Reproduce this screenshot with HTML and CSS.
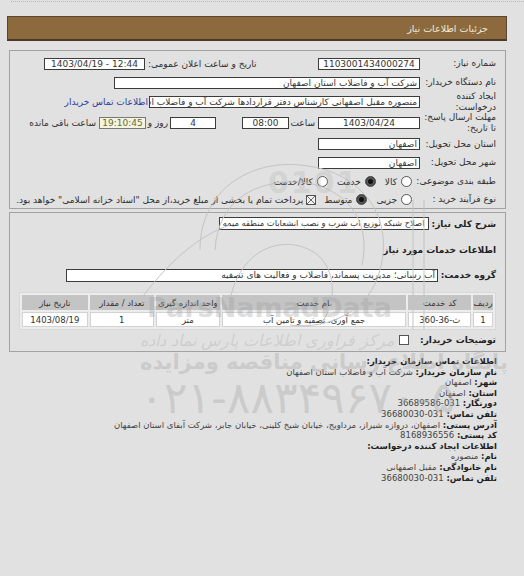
FILE: index.html
```html
<!DOCTYPE html>
<html dir="rtl" lang="fa">
<head>
<meta charset="utf-8">
<link rel="stylesheet" href="styles.css">
</head>
<body>
<div class="topline"></div>
<div class="hdr"><span>جزئیات اطلاعات نیاز</span></div>

<div class="panel p1">
  <div class="row r1">
    <div class="lbl">شماره نیاز:</div>
    <div class="box w102 c">1103001434000274</div>
    <div class="lbl2">تاریخ و ساعت اعلان عمومی:</div>
    <div class="box w101 c ltr">1403/04/19 - 12:44</div>
  </div>
  <div class="row r2">
    <div class="lbl">نام دستگاه خریدار:</div>
    <div class="box w306">شرکت آب و فاضلاب استان اصفهان</div>
  </div>
  <div class="row r3">
    <div class="lbl ml">ایجاد کننده<br>درخواست:</div>
    <div class="box w271 clip">منصوره مقبل اصفهانی کارشناس دفتر قراردادها شرکت آب و فاضلاب استان اصفهان</div>
    <a class="link">اطلاعات تماس خریدار</a>
  </div>
  <div class="row r4">
    <div class="lbl ml">مهلت ارسال پاسخ:<br>تا تاریخ:</div>
    <div class="box w102 c">1403/04/24</div>
    <div class="cell w29">ساعت</div>
    <div class="box w47 c">08:00</div>
    <div class="spacer"></div>
    <div class="box w46 c">4</div>
    <div class="cell w24">روز و</div>
    <div class="box w47 c remain">19:10:45</div>
    <div class="cell pr3">ساعت باقی مانده</div>
  </div>
  <div class="row r5">
    <div class="lbl">استان محل تحویل:</div>
    <div class="box w102">اصفهان</div>
  </div>
  <div class="row r6">
    <div class="lbl">شهر محل تحویل:</div>
    <div class="box w102">اصفهان</div>
  </div>
  <div class="row r7">
    <div class="lbl">طبقه بندی موضوعی:</div>
    <span class="radio first"></span><span class="opt">کالا</span>
    <span class="radio on"></span><span class="opt">خدمت</span>
    <span class="radio"></span><span class="opt">کالا/خدمت</span>
  </div>
  <div class="row r8">
    <div class="lbl">نوع فرآیند خرید :</div>
    <span class="radio first"></span><span class="opt">جزیی</span>
    <span class="radio on"></span><span class="opt">متوسط</span>
    <span class="chk x"></span><span class="opt">پرداخت تمام یا بخشی از مبلغ خرید،از محل "اسناد خزانه اسلامی" خواهد بود.</span>
  </div>
</div>

<div class="panel p2">
  <div class="row s1">
    <div class="blbl">شرح کلی نیاز:</div>
    <div class="box auto small">اصلاح شبکه توزیع اب شرب و نصب انشعابات منطقه میمه</div>
  </div>
  <div class="row s2">
    <div class="blbl">اطلاعات خدمات مورد نیاز</div>
  </div>
  <div class="row s3">
    <div class="blbl">گروه خدمت:</div>
    <div class="box w372">آب رسانی؛ مدیریت پسماند، فاضلاب و فعالیت های تصفیه</div>
  </div>
  <table class="grid">
    <tr>
      <th class="c1">ردیف</th>
      <th class="c2">کد خدمت</th>
      <th class="c3">نام خدمت</th>
      <th class="c4">واحد اندازه گیری</th>
      <th class="c5">تعداد / مقدار</th>
      <th class="c6">تاریخ نیاز</th>
    </tr>
    <tr>
      <td>1</td>
      <td>ث-36-360</td>
      <td>جمع آوری، تصفیه و تامین آب</td>
      <td>متر</td>
      <td>1</td>
      <td>1403/08/19</td>
    </tr>
  </table>
  <div class="row s4">
    <div class="blbl">توضیحات خریدار:</div>
    <span class="chk"></span>
  </div>
</div>

<div class="contact">
  <div><b>اطلاعات تماس سازمان خریدار:</b></div>
  <div><b>نام سازمان خریدار:</b> شرکت آب و فاضلاب استان اصفهان</div>
  <div><b>شهر:</b> اصفهان</div>
  <div><b>استان:</b> اصفهان</div>
  <div><b>دورنگار:</b> 031-36689586</div>
  <div><b>تلفن تماس:</b> 031-36680030</div>
  <div><b>آدرس پستی:</b> اصفهان، دروازه شیراز، مرداویج، خیابان شیخ کلینی، خیابان جابر، شرکت آبفای استان اصفهان</div>
  <div><b>کد پستی:</b> 8168936556</div>
  <div><b>اطلاعات ایجاد کننده درخواست:</b></div>
  <div><b>نام:</b> منصوره</div>
  <div><b>نام خانوادگی:</b> مقبل اصفهانی</div>
  <div><b>تلفن تماس:</b> 031-36680030</div>
</div>

<svg class="wm-art" width="524" height="576" viewBox="0 0 524 576">
  <g fill="none" stroke="#c4c4c4" stroke-width="1">
    <path d="M200 250 C200 190 250 160 300 165 C360 170 395 215 380 270 C370 310 330 330 290 325"/>
    <path d="M215 250 C218 200 255 180 300 182 C345 186 372 220 362 265"/>
    <path d="M230 300 C240 250 280 235 310 250 C335 262 340 300 320 325"/>
    <path d="M413 200 L413 330 M424 200 L424 330"/>
    <path d="M140 300 C170 260 200 235 230 225"/>
  </g>
</svg>
<div class="wm wm-num">0101</div>
<div class="wm wm-en">ParsNamadData</div>
<div class="wm wm-1">مرکز فراوری اطلاعات پارس نماد داده</div>
<div class="wm wm-2">پایگاه اطلاع رسانی مناقصه ومزایده</div>
<div class="wm wm-3">۰۲۱-۸۸۳۴۹۶۷۰-۵</div>
</body>
</html>
```
FILE: styles.css
```css
* { box-sizing: border-box; }
html, body { margin: 0; padding: 0; }
body {
  background: #e1e1e1;
  font-family: Tahoma, "DejaVu Sans", sans-serif;
  font-size: 9px;
  color: #2e2e2e;
  width: 524px;
  height: 576px;
  overflow: hidden;
  position: relative;
}
.topline {
  height: 0;
  border-top: 1px dotted #b8b8b8;
  margin: 1px 0 0 11px;
}
.hdr {
  margin: 14px 17px 0 7px;
  height: 25px;
  background: #8c6a3d;
  border: 1px solid #5a4630;
  border-bottom: 2px solid #4a3a28;
  color: #f4ead6;
  display: flex;
  align-items: center;
  padding-right: 18px;
  font-size: 9.5px;
}
.panel {
  margin-left: 9px;
  margin-right: 18px;
  border: 1px solid #a2a2a2;
}
.p1 { margin-top: 9px; height: 159px; padding: 3px 9px 0 0; }
.p2 { margin-top: 3px; height: 140px; padding: 3px 9px 0 0; }
.row { display: flex; align-items: center; white-space: nowrap; }
.r1, .r2, .r3, .r6, .r7 { height: 19px; }
.r4 { height: 24px; }
.r5 { height: 18px; }
.r8 { height: 17px; }
.lbl { width: 76px; flex: none; line-height: 11px; }
.lbl.ml { white-space: normal; }
.lbl2 { width: 173px; flex: none; text-align: left; padding-left: 3px; }
.box {
  height: 12px;
  border: 1px solid #3c3c3c;
  background: #fff;
  line-height: 10px;
  padding: 0 2px;
  flex: none;
  overflow: hidden;
  color: #333;
}
.box.c { text-align: center; }
.box.ltr { direction: ltr; }
.box.small { font-size: 8.4px; padding: 0 3px 0 3px; }
.box.auto { width: auto; }
.w102 { width: 102px; }
.w101 { width: 101px; }
.w306 { width: 306px; }
.w271 { width: 271px; }
.w47 { width: 47px; }
.w46 { width: 46px; }
.w372 { width: 372px; }
.clip { white-space: nowrap; }
.link { color: #2a3ca0; margin-right: 1px; }
.cell { flex: none; }
.w29 { width: 29px; padding-right: 3px; }
.w24 { width: 24px; padding-right: 2px; }
.pr3 { padding-right: 3px; }
.spacer { width: 26px; flex: none; }
.remain { background: #f4f4e0; color: #6b6b30; border-color: #777; }
.radio {
  width: 11px; height: 11px;
  border: 1px solid #555;
  border-radius: 50%;
  background: #fff;
  flex: none;
  margin: 0 9px 0 4px;
  position: relative;
}
.radio.first { margin-right: 8px; }
.radio.on { background: #111; box-shadow: inset 0 0 0 2px #555; }
.opt { flex: none; }
.chk {
  width: 10px; height: 10px;
  border: 1px solid #555;
  background: #fff;
  flex: none;
  margin: 0 8px 0 3px;
  position: relative;
}
.chk.x {
  background:
    linear-gradient(45deg, transparent 45%, #666 45%, #666 55%, transparent 55%),
    linear-gradient(-45deg, transparent 45%, #666 45%, #666 55%, transparent 55%),
    #f2f2f2;
}
.blbl { font-weight: bold; flex: none; padding-left: 3px; color: #222; }
.s1 { height: 15px; }
.s1 .box { height: 13px; line-height: 11px; }
.s2 { height: 22px; margin-top: 8px; }
.s3 { height: 16px; margin-top: 6px; }
.s3 .blbl { width: 58px; }
.s3 .box { height: 13px; line-height: 11px; }
.grid {
  margin: 9px 0 0 0;
  width: 477px;
  border-collapse: separate;
  border-spacing: 2px;
  background: #ececec;
  border: 1px solid #d8d8d8;
  font-size: 8.5px;
}
.grid th {
  background: #c4c4c4;
  font-weight: normal;
  height: 15px;
  padding: 0;
  color: #333;
}
.grid td {
  background: #fff;
  height: 15px;
  padding: 0;
  text-align: center;
  color: #333;
  border: 1px solid #d2d2d2;
}
.grid .c1 { width: 20px; }
.grid .c2 { width: 63px; }
.grid .c3 { width: 188px; }
.grid .c4 { width: 65px; }
.grid .c5 { width: 65px; }
.grid .c6 { width: 66px; }
.s4 { height: 16px; margin-top: 2px; }
.contact {
  margin: 4px 27px 0 0;
  line-height: 10.6px;
  font-size: 8.5px;
  color: #444;
}
.contact b { color: #1e1e1e; }
.wm-art { position: absolute; left: 0; top: 0; pointer-events: none; }
.wm { position: absolute; white-space: nowrap; pointer-events: none; direction: rtl; }
.wm-num {
  left: 268px; top: 165px;
  font-family: "DejaVu Sans", sans-serif;
  font-weight: bold;
  font-size: 30px;
  letter-spacing: 2px;
  color: rgba(165, 165, 165, 0.22);
  direction: ltr;
}
.wm-en {
  left: 147px; top: 292px;
  font-family: "DejaVu Sans", sans-serif;
  font-weight: bold;
  font-size: 27px;
  color: rgba(160, 160, 160, 0.35);
  direction: ltr;
}
.wm-1 {
  left: 140px; top: 331px;
  font-size: 16px;
  font-style: italic;
  color: rgba(170, 170, 170, 0.35);
}
.wm-2 {
  left: 140px; top: 350px;
  font-size: 21px;
  font-weight: bold;
  color: rgba(175, 175, 175, 0.45);
}
.wm-3 {
  left: 140px; top: 372px;
  font-size: 44px;
  color: rgba(175, 175, 175, 0.45);
  direction: ltr;
}
```
